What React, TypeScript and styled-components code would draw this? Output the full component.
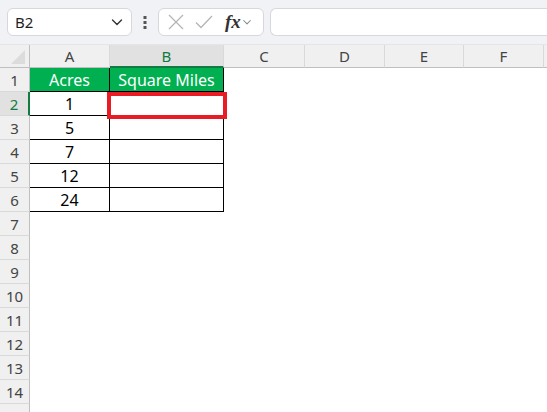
import React from 'react'
import styled, { createGlobalStyle, css } from 'styled-components'

const GlobalStyle = createGlobalStyle`
  html, body {
    margin: 0;
    padding: 0;
    background: #ffffff;
    overflow: hidden;
  }
  * { box-sizing: border-box; }
`

const Wrapper = styled.main`
  width: 547px;
  height: 412px;
  overflow: hidden;
  font-family: 'Noto Sans', 'Open Sans', sans-serif;
`

const Toolbar = styled.section`
  display: flex;
  align-items: center;
  height: 45px;
  padding: 0 0 1px 7px;
  background: #f0f2f5;
  border-bottom: 1px solid #e3e5e8;
`

const Box = styled.div`
  display: flex;
  align-items: center;
  height: 28px;
  background: #ffffff;
  border: 1px solid #d6d8db;
  border-radius: 6px;
`

const NameBox = styled(Box)`
  width: 125px;
  justify-content: space-between;
  padding: 0 6px 0 7px;
  font-size: 15px;
  color: #1f1f1f;
`

const Dots = styled.div`
  width: 26px;
  display: flex;
  justify-content: center;
`

const FormulaTools = styled(Box)`
  width: 106px;
  padding: 0 4px 0 8px;
`

const Fx = styled.span`
  margin-left: 10px;
  font-family: 'Liberation Serif', serif;
  font-style: italic;
  font-weight: 700;
  font-size: 19px;
  color: #333;
`

const FormulaInput = styled(Box)`
  flex: 1;
  margin-left: 6px;
  border-right: none;
  border-radius: 6px 0 0 6px;
`

const Sheet = styled.div`
  display: grid;
  grid-template-columns: 30px 80px 114px 81px 80px 79px 80px 40px;
  grid-template-rows: 23px;
  grid-auto-rows: 24px;
  position: relative;
`

const ColHead = styled.div<{ $active?: boolean }>`
  display: flex;
  align-items: center;
  justify-content: center;
  font-size: 15px;
  color: #444;
  background: #f0f0f0;
  border-right: 1px solid #d9d9d9;
  border-bottom: 1px solid #bfbfbf;
  ${({ $active }) =>
    $active &&
    css`
      background: #e1e1e1;
      color: #107c41;
      border-bottom: 2px solid #107c41;
    `}
`

const Corner = styled.div`
  background: #f0f0f0;
  border-right: 1px solid #bfbfbf;
  border-bottom: 1px solid #bfbfbf;
  position: relative;
  &::after {
    content: '';
    position: absolute;
    right: 4px;
    bottom: 3px;
    width: 0;
    height: 0;
    border-left: 14px solid transparent;
    border-bottom: 14px solid #dcdcdc;
  }
`

const RowHead = styled.div<{ $active?: boolean }>`
  display: flex;
  align-items: center;
  justify-content: center;
  font-size: 15px;
  color: #444;
  background: #f0f0f0;
  border-right: 1px solid #bfbfbf;
  border-bottom: 1px solid #d9d9d9;
  ${({ $active }) =>
    $active &&
    css`
      background: #e1e1e1;
      color: #107c41;
      border-right: 2px solid #107c41;
    `}
`

const Cell = styled.div<{ $table?: boolean; $head?: boolean }>`
  display: flex;
  align-items: center;
  justify-content: center;
  font-size: 16px;
  color: #000;
  white-space: nowrap;
  ${({ $table }) =>
    $table &&
    css`
      border-right: 1px solid #000;
      border-bottom: 1px solid #000;
    `}
  ${({ $head }) =>
    $head &&
    css`
      background: #00b050;
      color: #ffffff;
    `}
`

const Selection = styled.div`
  position: absolute;
  left: 107px;
  top: 47px;
  width: 120px;
  height: 27px;
  border: 4px solid #e81c24;
  pointer-events: none;
`

const columns = ['A', 'B', 'C', 'D', 'E', 'F', 'G']
const acres = ['1', '5', '7', '12', '24']

const Chevron = ({ size = 14, color = '#444' }: { size?: number; color?: string }) => (
  <svg width={size} height={size} viewBox="0 0 16 16" fill="none">
    <path d="M3.5 6 L8 10.5 L12.5 6" stroke={color} strokeWidth="1.4" strokeLinecap="round" strokeLinejoin="round" />
  </svg>
)

const cellText = (r: number, ci: number) => {
  if (r === 1 && ci === 0) return 'Acres'
  if (r === 1 && ci === 1) return 'Square Miles'
  if (r > 1 && r <= 6 && ci === 0) return acres[r - 2]
  return ''
}

const App: React.FC = () => {
  const rows = Array.from({ length: 15 }, (_, i) => i + 1)
  return (
    <Wrapper>
      <GlobalStyle />
      <Toolbar>
        <NameBox>
          <span>B2</span>
          <Chevron size={16} color="#333" />
        </NameBox>
        <Dots>
          <svg width="4" height="16" viewBox="0 0 4 16">
            <rect x="0.5" y="2" width="3" height="3" fill="#555" />
            <rect x="0.5" y="7" width="3" height="3" fill="#555" />
            <rect x="0.5" y="12" width="3" height="3" fill="#555" />
          </svg>
        </Dots>
        <FormulaTools>
          <svg width="18" height="18" viewBox="0 0 18 18">
            <path d="M2 2 L16 16 M16 2 L2 16" stroke="#b5b5b5" strokeWidth="1.3" />
          </svg>
          <svg width="22" height="18" viewBox="0 0 22 18" style={{ marginLeft: 8 }}>
            <path d="M3 9.5 L8 14.5 L19 3" stroke="#b5b5b5" strokeWidth="1.3" fill="none" />
          </svg>
          <Fx>fx</Fx>
          <Chevron size={12} color="#888" />
        </FormulaTools>
        <FormulaInput />
      </Toolbar>
      <Sheet>
        <Corner />
        {columns.map(c => (
          <ColHead key={c} $active={c === 'B'}>
            {c}
          </ColHead>
        ))}
        {rows.map(r => (
          <React.Fragment key={r}>
            <RowHead $active={r === 2}>{r}</RowHead>
            {columns.map((c, ci) => {
              const inTable = r <= 6 && ci < 2
              return (
                <Cell key={c} $table={inTable} $head={r === 1 && inTable}>
                  {cellText(r, ci)}
                </Cell>
              )
            })}
          </React.Fragment>
        ))}
        <Selection />
      </Sheet>
    </Wrapper>
  )
}

export default App
